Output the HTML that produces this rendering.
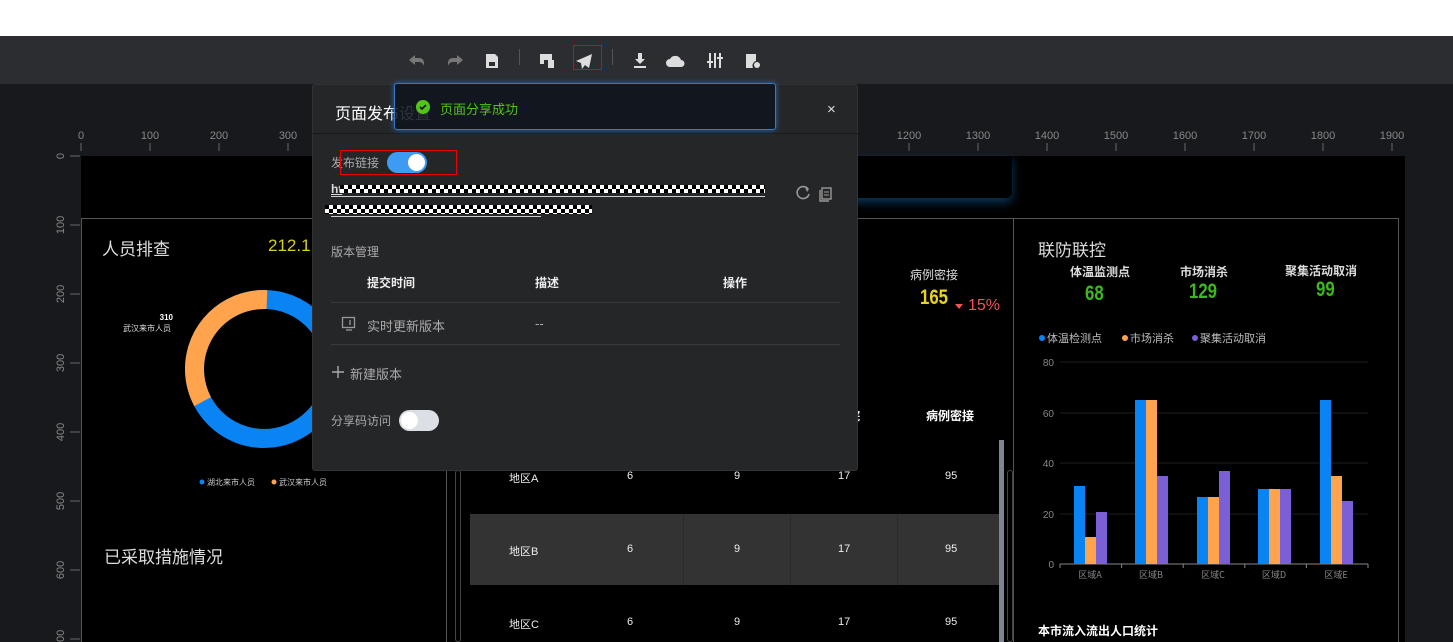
<!DOCTYPE html>
<html><head><meta charset="utf-8"><style>
*{margin:0;padding:0;box-sizing:border-box}
body{width:1453px;height:642px;overflow:hidden;background:#18191c;font-family:"Liberation Sans","Noto Sans CJK SC",sans-serif;position:relative}
.a{position:absolute}
.t{white-space:nowrap}
.chk{background:repeating-conic-gradient(#fff 0 25%,#000 0 50%) 0 0/8px 8px}
</style></head><body>
<div class="a" style="left:0;top:0;width:1453px;height:36px;background:#fff"></div>
<div class="a" style="left:0;top:36px;width:1453px;height:48px;background:#2c2d30"></div>
<svg class="a" style="left:400px;top:46px" width="380" height="30" viewBox="0 0 380 30">
<g fill="#777"><path d="M9 14l6-5v3h4c3 0 5 2 5 5v3c-1-3-3-4-5-4h-4v3z"/><path d="M63 14l-6-5v3h-4c-3 0-5 2-5 5v3c1-3 3-4 5-4h4v3z"/></g>
<g fill="#ddd">
<path d="M86 8h9l3 3v11h-12z"/><rect x="89" y="16" width="6" height="4" fill="#2c2d30"/>
<rect x="119" y="3" width="1" height="16" fill="#555"/>
<path d="M140 8h12v9h-4v-3h-4v4h-4z"/><rect x="148" y="14" width="6" height="8"/>
<path d="M192 8l-16 7 5 2 1 6 3-4 4 3z"/>
<rect x="212" y="3" width="1" height="16" fill="#555"/>
<path d="M238 7h4v6h3l-5 5-5-5h3z"/><rect x="234" y="20" width="12" height="2"/>
<path d="M272 21h-2a4 4 0 0 1 0-8 6 6 0 0 1 11 1 3.5 3.5 0 0 1 0 7z"/>
<rect x="309" y="7" width="2" height="15"/><rect x="314" y="7" width="2" height="15"/><rect x="319" y="7" width="2" height="15"/><rect x="307" y="15" width="6" height="2"/><rect x="317" y="11" width="6" height="2"/>
<path d="M346 8h10v7a5 5 0 0 0-3 7h-7z"/><circle cx="357" cy="19" r="3"/>
</g></svg>
<div class="a" style="left:573px;top:45px;width:29px;height:25px;border:1px solid #e00"></div>
<div class="a" style="left:75px;top:125px;width:1378px;height:20px;background:#18191c"></div>
<svg class="a" style="left:0;top:125px" width="1453" height="31">
<g fill="#888" font-size="11" font-family="Liberation Sans" text-anchor="middle">
<text x="81" y="14">0</text><text x="150" y="14">100</text><text x="219" y="14">200</text><text x="288" y="14">300</text>
<text x="909" y="14">1200</text><text x="978" y="14">1300</text><text x="1047" y="14">1400</text><text x="1116" y="14">1500</text><text x="1185" y="14">1600</text><text x="1254" y="14">1700</text><text x="1323" y="14">1800</text><text x="1392" y="14">1900</text></g>
<g stroke="#666"><path d="M81 18v8M150 18v8M219 18v8M288 18v8M909 18v8M978 18v8M1047 18v8M1116 18v8M1185 18v8M1254 18v8M1323 18v8M1392 18v8"/></g></svg>
<svg class="a" style="left:50px;top:150px" width="30" height="492">
<g fill="#888" font-size="11" font-family="Liberation Sans" text-anchor="middle">
<text transform="translate(14,6) rotate(-90)">0</text><text transform="translate(14,75) rotate(-90)">100</text><text transform="translate(14,144) rotate(-90)">200</text><text transform="translate(14,213) rotate(-90)">300</text><text transform="translate(14,282) rotate(-90)">400</text><text transform="translate(14,351) rotate(-90)">500</text><text transform="translate(14,420) rotate(-90)">600</text><text transform="translate(14,489) rotate(-90)">700</text></g>
<g stroke="#666"><path d="M20 6h10M20 75h10M20 144h10M20 213h10M20 282h10M20 351h10M20 420h10M20 489h10"/></g></svg>
<div class="a" style="left:81px;top:156px;width:1324px;height:486px;background:#000"></div>
<div class="a" style="left:800px;top:156px;width:212px;height:42px;border-radius:0 0 6px 0;box-shadow:0 4px 10px #0a3a60;background:#000"></div>
<div class="a" style="left:81px;top:218px;width:366px;height:424px;border:1px solid #555;border-bottom:none"></div>
<div class="a" style="left:447px;top:218px;width:566px;height:424px;border-top:1px solid #555"></div>
<div class="a" style="left:1013px;top:218px;width:386px;height:424px;border:1px solid #555;border-bottom:none"></div>
<div class="a" style="left:455px;top:470px;width:6px;height:172px;border:1px solid #444;border-radius:3px"></div>
<div class="a" style="left:1007px;top:470px;width:6px;height:172px;border:1px solid #444;border-radius:3px"></div>
<div class="a t" style="left:102px;top:235px;color:#ddd;font-size:17px">人员排查</div>
<div class="a t" style="left:268px;top:236px;color:#d4d21a;font-size:17px">212.1</div>
<div class="a t" style="left:104px;top:543px;color:#ddd;font-size:17px">已采取措施情况</div>
<svg class="a" style="left:100px;top:280px" width="260" height="220">
<circle cx="164" cy="89" r="69.5" fill="none" stroke="#0b84f3" stroke-width="19"/>
<circle cx="164" cy="89" r="69.5" fill="none" stroke="#ffa34c" stroke-width="19" stroke-dasharray="146 500" transform="rotate(152 164 89)"/>
<text x="73" y="40" fill="#fff" font-size="8" font-weight="bold" text-anchor="end" font-family="Liberation Sans">310</text>
<text x="71" y="51" fill="#ddd" font-size="8" text-anchor="end" font-family="Noto Sans CJK SC">武汉来市人员</text>
<circle cx="102" cy="202" r="2.5" fill="#0b84f3"/><text x="107" y="205" fill="#ccc" font-size="8" font-family="Noto Sans CJK SC">湖北来市人员</text>
<circle cx="174" cy="202" r="2.5" fill="#ffa34c"/><text x="179" y="205" fill="#ccc" font-size="8" font-family="Noto Sans CJK SC">武汉来市人员</text>
</svg>
<div class="a t" style="left:910px;top:266px;color:#ddd;font-size:12px">病例密接</div>
<div class="a t" style="left:920px;top:286px;color:#e8d41a;font-size:21px;font-weight:bold;transform:scaleX(.8);transform-origin:left">165</div>
<div class="a" style="left:955px;top:304px;border:4px solid transparent;border-top:5px solid #e55"></div>
<div class="a t" style="left:968px;top:297px;color:#e55;font-size:16px">15%</div>
<div class="a t" style="left:848px;top:407px;color:#fff;font-size:12px;font-weight:bold">院</div>
<div class="a t" style="left:926px;top:407px;color:#fff;font-size:12px;font-weight:bold">病例密接</div>
<div class="a" style="left:470px;top:514px;width:530px;height:71px;background:#333"></div>
<div class="a" style="left:683px;top:514px;width:1px;height:71px;background:#2a2a2a"></div>
<div class="a" style="left:790px;top:514px;width:1px;height:71px;background:#2a2a2a"></div>
<div class="a" style="left:897px;top:514px;width:1px;height:71px;background:#2a2a2a"></div>
<div class="a" style="left:999px;top:440px;width:5px;height:202px;background:#7d8590"></div>
<div style="color:#eee;font-size:11px">
<div class="a t" style="left:509px;top:470px">地区A</div><div class="a t" style="left:627px;top:470px">6</div><div class="a t" style="left:734px;top:470px">9</div><div class="a t" style="left:838px;top:470px">17</div><div class="a t" style="left:945px;top:470px">95</div>
<div class="a t" style="left:509px;top:543px">地区B</div><div class="a t" style="left:627px;top:543px">6</div><div class="a t" style="left:734px;top:543px">9</div><div class="a t" style="left:838px;top:543px">17</div><div class="a t" style="left:945px;top:543px">95</div>
<div class="a t" style="left:509px;top:616px">地区C</div><div class="a t" style="left:627px;top:616px">6</div><div class="a t" style="left:734px;top:616px">9</div><div class="a t" style="left:838px;top:616px">17</div><div class="a t" style="left:945px;top:616px">95</div>
</div>
<div class="a t" style="left:1038px;top:236px;color:#ddd;font-size:17px">联防联控</div>
<div class="a t" style="left:1070px;top:263px;color:#ddd;font-size:12px;font-weight:bold">体温监测点</div>
<div class="a t" style="left:1180px;top:263px;color:#ddd;font-size:12px;font-weight:bold">市场消杀</div>
<div class="a t" style="left:1285px;top:262px;color:#ddd;font-size:12px;font-weight:bold">聚集活动取消</div>
<div class="a t" style="left:1085px;top:282px;color:#3cb81c;font-size:21px;font-weight:bold;transform:scaleX(.8);transform-origin:left">68</div>
<div class="a t" style="left:1189px;top:280px;color:#3cb81c;font-size:21px;font-weight:bold;transform:scaleX(.8);transform-origin:left">129</div>
<div class="a t" style="left:1316px;top:278px;color:#3cb81c;font-size:21px;font-weight:bold;transform:scaleX(.8);transform-origin:left">99</div>
<svg class="a" style="left:1013px;top:320px" width="386" height="322">
<g font-family="Noto Sans CJK SC" font-size="11" fill="#bbb">
<circle cx="29" cy="18" r="3" fill="#0b84f3"/><text x="34" y="22">体温检测点</text>
<circle cx="112" cy="18" r="3" fill="#ffa34c"/><text x="117" y="22">市场消杀</text>
<circle cx="182" cy="18" r="3" fill="#7b5fd6"/><text x="187" y="22">聚集活动取消</text></g>
<g stroke="#1e1e1e"><path d="M47 42h308M47 93h308M47 143h308M47 194h308"/></g>
<g font-family="Liberation Sans" font-size="10" fill="#888" text-anchor="end"><text x="41" y="46">80</text><text x="41" y="97">60</text><text x="41" y="147">40</text><text x="41" y="198">20</text><text x="41" y="248">0</text></g>
<path d="M47 244h308M47 244v4M108.6 244v4M170.2 244v4M231.8 244v4M293.4 244v4M355 244v4" stroke="#888"/>
<g fill="#0b84f3"><rect x="61" y="166" width="11" height="78"/><rect x="122" y="80" width="11" height="164"/><rect x="184" y="177" width="11" height="67"/><rect x="245" y="169" width="11" height="75"/><rect x="307" y="80" width="11" height="164"/></g>
<g fill="#ffa34c"><rect x="72" y="217" width="11" height="27"/><rect x="133" y="80" width="11" height="164"/><rect x="195" y="177" width="11" height="67"/><rect x="256" y="169" width="11" height="75"/><rect x="318" y="156" width="11" height="88"/></g>
<g fill="#7b5fd6"><rect x="83" y="192" width="11" height="52"/><rect x="144" y="156" width="11" height="88"/><rect x="206" y="151" width="11" height="93"/><rect x="267" y="169" width="11" height="75"/><rect x="329" y="181" width="11" height="63"/></g>
<g font-family="Noto Sans CJK SC" font-size="9" fill="#888" text-anchor="middle"><text x="77" y="258">区域A</text><text x="138" y="258">区域B</text><text x="200" y="258">区域C</text><text x="261" y="258">区域D</text><text x="323" y="258">区域E</text></g>
</svg>
<div class="a t" style="left:1038px;top:622px;color:#fff;font-size:12px;font-weight:bold">本市流入流出人口统计</div>
<div class="a" style="left:312px;top:84px;width:546px;height:387px;background:#252628;border-radius:3px;border:1px solid #333"></div>
<div class="a" style="left:312px;top:133px;width:546px;height:1px;background:#1a1a1a"></div>
<div class="a t" style="left:335px;top:100px;color:#fff;font-size:16px">页面发布设置</div>
<div class="a t" style="left:827px;top:101px;color:#ddd;font-size:15px">×</div>
<div class="a t" style="left:331px;top:154px;color:#aaa;font-size:12px">发布链接</div>
<div class="a" style="left:387px;top:152px;width:40px;height:21px;border-radius:11px;background:#3d9bf4"></div>
<div class="a" style="left:408px;top:154px;width:17px;height:17px;border-radius:50%;background:#fff"></div>
<div class="a" style="left:340px;top:150px;width:117px;height:25px;border:1px solid #e00"></div>
<div class="a t" style="left:331px;top:182px;color:#ddd;font-size:12px;font-weight:bold;text-decoration:underline">ht</div>
<div class="a chk" style="left:340px;top:185px;width:425px;height:8px"></div>
<div class="a" style="left:331px;top:196px;width:434px;height:1px;background:#ccc"></div>
<div class="a chk" style="left:325px;top:205px;width:267px;height:9px"></div>
<div class="a" style="left:331px;top:216px;width:210px;height:1px;background:#ccc"></div>
<svg class="a" style="left:795px;top:184px" width="40" height="18"><path d="M13 5a6 6 0 1 0 1 5" fill="none" stroke="#999" stroke-width="1.6"/><path d="M10 3l4 2-2 3z" fill="#999"/><rect x="27" y="4" width="9" height="11" fill="none" stroke="#999" stroke-width="1.4"/><path d="M25 6v11h9" fill="none" stroke="#999" stroke-width="1.4"/><path d="M29 8h5M29 11h5" stroke="#999"/></svg>
<div class="a t" style="left:331px;top:243px;color:#aaa;font-size:12px">版本管理</div>
<div class="a t" style="left:367px;top:274px;color:#eee;font-size:12px;font-weight:bold">提交时间</div>
<div class="a t" style="left:535px;top:274px;color:#eee;font-size:12px;font-weight:bold">描述</div>
<div class="a t" style="left:723px;top:274px;color:#eee;font-size:12px;font-weight:bold">操作</div>
<div class="a" style="left:331px;top:302px;width:509px;height:1px;background:#3a3a3c"></div>
<svg class="a" style="left:341px;top:316px" width="16" height="16"><rect x="1.5" y="1.5" width="12" height="10" fill="none" stroke="#999" stroke-width="1.3"/><path d="M9 4v5M5 14h6" stroke="#999" stroke-width="1.3"/></svg>
<div class="a t" style="left:367px;top:316px;color:#aaa;font-size:13px">实时更新版本</div>
<div class="a t" style="left:535px;top:316px;color:#aaa;font-size:13px">--</div>
<div class="a" style="left:331px;top:344px;width:509px;height:1px;background:#3a3a3c"></div>
<svg class="a" style="left:331px;top:365px" width="14" height="14"><path d="M7 1v12M1 7h12" stroke="#aaa" stroke-width="1.4"/></svg>
<div class="a t" style="left:350px;top:364px;color:#aaa;font-size:13px">新建版本</div>
<div class="a t" style="left:331px;top:412px;color:#aaa;font-size:12px">分享码访问</div>
<div class="a" style="left:399px;top:410px;width:40px;height:21px;border-radius:11px;background:#dcdfe6"></div>
<div class="a" style="left:401px;top:412px;width:17px;height:17px;border-radius:50%;background:#fff"></div>
<div class="a" style="left:394px;top:83px;width:382px;height:47px;background:rgba(16,21,29,0.88);border:1px solid #3a78c0;border-radius:3px;box-shadow:0 0 6px #2a6ab8"></div>
<div class="a" style="left:416px;top:100px;width:14px;height:14px;border-radius:50%;background:#52c41a"></div>
<svg class="a" style="left:416px;top:100px" width="14" height="14"><path d="M4 7l2 2 4-4" fill="none" stroke="#10151d" stroke-width="1.6"/></svg>
<div class="a t" style="left:440px;top:99px;color:#52c41a;font-size:13px">页面分享成功</div>
</body></html>
